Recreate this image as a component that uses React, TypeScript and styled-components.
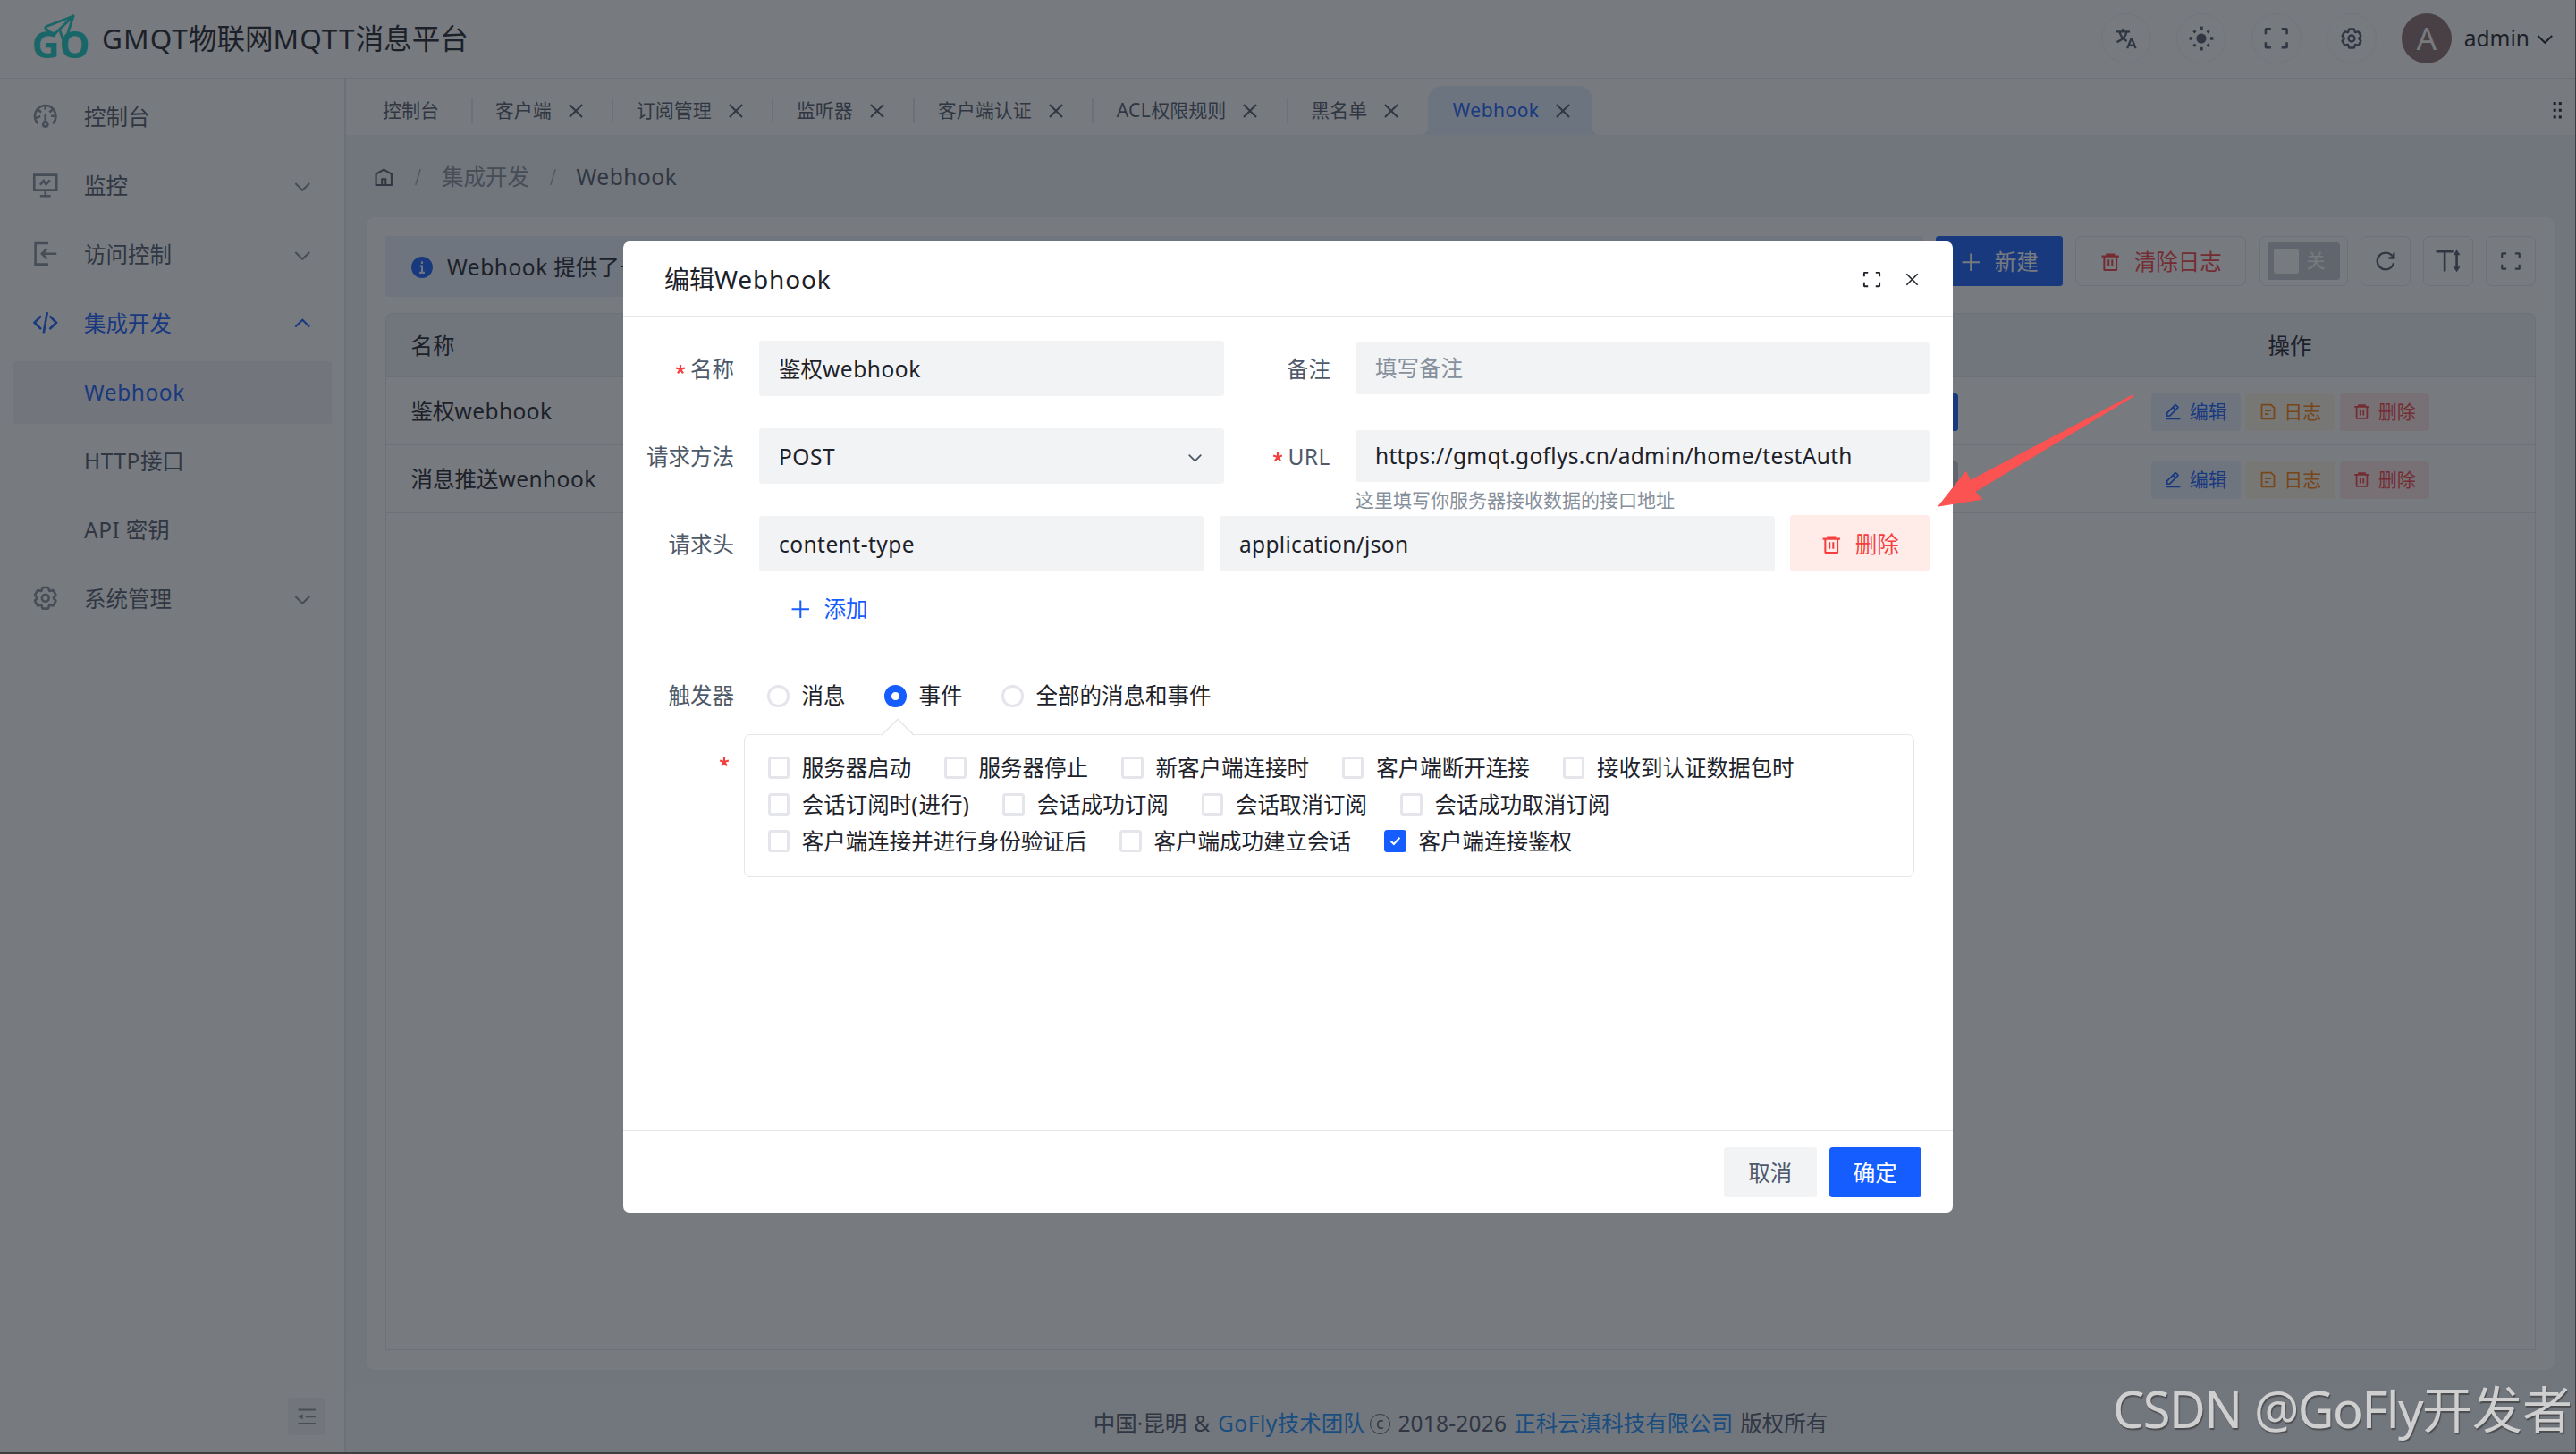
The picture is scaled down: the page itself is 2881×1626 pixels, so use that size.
import React from "react";
import styled, { createGlobalStyle, css } from "styled-components";

const GlobalStyle = createGlobalStyle`
  *, *::before, *::after { box-sizing: border-box; }
  html, body { margin: 0; padding: 0; }
  body {
    width: 2881px;
    height: 1626px;
    overflow: hidden;
    background: #3f3d3e;
    font-family: "Noto Sans", "Noto Sans CJK SC", sans-serif;
    font-size: 24.5px;
    line-height: 1.5;
    color: #1d2129;
  }
`;

/* ---------- text ---------- */

const Latin = styled.span<{ $track: number }>`
  letter-spacing: ${(p) => p.$track}em;
`;

function Label({ text, track = 0.022 }: { text: string; track?: number }) {
  return (
    <span>
      {text.split(/([\x21-\x7e]+)/).map((run, i) =>
        i % 2 ? (
          <Latin key={i} $track={track}>
            {run}
          </Latin>
        ) : (
          run
        )
      )}
    </span>
  );
}

/* ---------- icons ---------- */

const Svg = styled.svg<{ $size: number; $stroke?: number }>`
  display: block;
  flex: none;
  width: ${(p) => p.$size}px;
  height: ${(p) => p.$size}px;
  fill: none;
  stroke: currentColor;
  stroke-width: ${(p) => p.$stroke ?? 4};
`;

const paths: Record<string, string[]> = {
  dashboard: [
    "M41.8 24c.1 4.6-1.5 9.3-5.2 13m5.2-13h-8.3m8.3 0c-.1-4.4-1.8-8.7-4.6-12M24 6c5.5 0 10.1 2.4 13.2 6M24 6c-5.7 0-10.4 2.6-13.5 6.4M24 6v7.5M37.2 12 31 17.5m-20.5-5.1L17 17.5m-6.5-5.1C7 16.7 5.4 22.500 6.500 28m4.900 9c-2.600-2.600-4.200-5.700-4.900-9m0 0 9-3.500M28 38a4 4 0 1 1-8 0 4 4 0 0 1 8 0Zm-4-4V20",
  ],
  monitor: ["M5 7h38v26H5zM24 33v9M15 43h18", "m15 24 6-7 4 6 7-7"],
  access: ["M29 42H7V6h22", "M43 24H19m8-9-9 9 9 9"],
  code: ["M16.734 12.686 5.42 24l11.314 11.314m14.521-22.628L42.57 24 31.255 35.314M27.2 6.28l-6.251 35.453"],
  settings: [
    "M18.797 6.732A1 1 0 0 1 19.76 6h8.48a1 1 0 0 1 .964.732l1.285 4.628a1 1 0 0 0 1.213.7l4.651-1.2a1 1 0 0 1 1.116.468l4.24 7.344a1 1 0 0 1-.153 1.2L38.193 23.3a1 1 0 0 0 0 1.402l3.364 3.427a1 1 0 0 1 .153 1.2l-4.24 7.344a1 1 0 0 1-1.116.468l-4.65-1.2a1 1 0 0 0-1.214.7l-1.285 4.628a1 1 0 0 1-.964.732h-8.48a1 1 0 0 1-.963-.732L17.51 36.64a1 1 0 0 0-1.213-.7l-4.65 1.2a1 1 0 0 1-1.116-.468l-4.24-7.344a1 1 0 0 1 .153-1.2L9.809 24.7a1 1 0 0 0 0-1.402l-3.364-3.427a1 1 0 0 1-.153-1.2l4.24-7.344a1 1 0 0 1 1.116-.468l4.65 1.2a1 1 0 0 0 1.213-.7l1.286-4.628Z",
    "M30 24a6 6 0 1 1-12 0 6 6 0 0 1 12 0Z",
  ],
  down: ["M39.6 17.443 24.043 33 8.487 17.443"],
  up: ["M39.6 30.557 24.043 15 8.487 30.557"],
  close: ["M9.857 9.858 38.142 38.142M38.142 9.858 9.857 38.142"],
  home: ["M7 17 24 7l17 10v24H7V17Z", "M20 41V28h8v13"],
  plus: ["M5 24h38M24 5v38"],
  trash: ["M5 11h38M10.500 11v29a1 1 0 0 0 1 1h25a1 1 0 0 0 1-1V11M16 11V7h16v4M20 18v15M28 18v15"],
  edit: [
    "m30.48 19.038 5.733-5.734a1 1 0 0 0 0-1.414l-5.586-5.586a1 1 0 0 0-1.414 0l-5.734 5.734m7 7L15.763 33.754a1 1 0 0 1-.59.286l-6.048.708a1 1 0 0 1-1.113-1.069l.477-6.31a1 1 0 0 1 .29-.631l14.7-14.7m7 7-7-7M6 42h36",
  ],
  file: ["M16 21h16m-16 9h10m13 12H9a1 1 0 0 1-1-1V7a1 1 0 0 1 1-1h23l8 8v27a1 1 0 0 1-1 1Z"],
  fullscreen: ["M42 17V9a1 1 0 0 0-1-1h-8M6 17V9a1 1 0 0 1 1-1h8m27 23v8a1 1 0 0 1-1 1h-8M6 31v8a1 1 0 0 0 1 1h8"],
  refresh: ["M38.837 18C36.463 12.136 30.715 8 24 8 15.163 8 8 15.163 8 24s7.163 16 16 16c7.455 0 13.720-5.100 15.496-12M40 8v10H30"],
  language: [
    "m42 43-2.385-6M26 43l2.384-6m11.231 0-.795-2-4.180-10h-1.280l-4.181 10-.795 2m11.231 0h-11.230M17 5l1 5M5 11h26M11 11s1.889 7.826 6.611 12.174C22.333 27.522 25 29 25 29M25 11s-1.889 7.826-6.611 12.174C13.667 27.522 6 31 6 31",
  ],
};

function Icon({ name, size, stroke }: { name: string; size: number; stroke?: number }) {
  return (
    <Svg viewBox="0 0 48 48" $size={size} $stroke={stroke}>
      {paths[name].map((d) => (
        <path key={d} d={d} />
      ))}
    </Svg>
  );
}

function SunIcon() {
  return (
    <Svg viewBox="0 0 48 48" $size={28} $stroke={0}>
      <g fill="currentColor">
        <circle cx="24" cy="24" r="9.500" />
        {[0, 90, 180, 270].map((a) => (
          <rect key={a} x="21" y="1" width="6" height="6" transform={`rotate(${a} 24 24)`} />
        ))}
        {[45, 135, 225, 315].map((a) => (
          <rect key={a} x="21.500" y="3" width="5" height="5" transform={`rotate(${a} 24 24)`} />
        ))}
      </g>
    </Svg>
  );
}

function DotsIcon() {
  return (
    <Svg viewBox="0 0 48 48" $size={24.5} $stroke={0}>
      <g fill="currentColor">
        {[6, 21, 36].map((y) => (
          <React.Fragment key={y}>
            <rect x="15" y={y} width="6" height="6" />
            <rect x="27" y={y} width="6" height="6" />
          </React.Fragment>
        ))}
      </g>
    </Svg>
  );
}

function InfoIcon() {
  return (
    <Svg viewBox="0 0 48 48" $size={28}>
      <circle cx="24" cy="24" r="20.500" fill="#165dff" stroke="none" />
      <path d="M24 12.500v4.500M20 21.500h4v12M19 34h10" stroke="#e8f3ff" strokeWidth="3.600" />
    </Svg>
  );
}

function LineHeightIcon() {
  return (
    <Svg viewBox="0 0 48 48" $size={31.5}>
      <path d="M4 8h29M18.500 8v34" />
      <path d="M39 12v24" />
      <path d="M39 5l6 9H33zM39 43l6-9H33z" fill="currentColor" stroke="none" />
    </Svg>
  );
}

function FoldIcon() {
  return (
    <Svg viewBox="0 0 48 48" $size={24.5}>
      <path d="M43 9H5M43 24H21M43 39H5" />
      <path d="M15 30V18l-10 6z" fill="currentColor" stroke="none" />
    </Svg>
  );
}

const StarSvg = styled.svg`
  display: block;
  flex: none;
  width: 12px;
  height: 12px;
  stroke: #f53f3f;
  stroke-width: 2.2;
`;

function RequiredStar() {
  return (
    <StarSvg viewBox="0 0 12 12">
      <path d="M6 6V1M6 6l4.900-1.500M6 6l3 4.300M6 6l-3 4.300M6 6L1.100 4.500" />
    </StarSvg>
  );
}

const LogoSvg = styled.svg`
  display: block;
  width: 66px;
  height: 54px;
  overflow: visible;
`;

function Logo() {
  return (
    <LogoSvg viewBox="0 0 66 54">
      <g fill="none" stroke="#13cec2" strokeWidth="2.800" strokeLinejoin="round" strokeLinecap="round">
        <path d="M45 2 15 13.500c-1.500.8-1.500 2.200-.4 3L20 20.500" />
        <path d="M45 2 35 33 30.500 19.500" />
        <path d="M45 2 23 23" />
      </g>
      <text x="-1.500" y="49" fontSize="40.500" fontWeight="700" fill="#13cec2" textLength="65" lengthAdjust="spacingAndGlyphs">
        GO
      </text>
    </LogoSvg>
  );
}

/* ---------- page shell ---------- */

const Page = styled.div`
  position: relative;
  width: 2880px;
  height: 1624px;
  display: grid;
  grid-template-rows: 88px 1fr;
  background: #fff;
`;

const Header = styled.header`
  display: flex;
  align-items: center;
  justify-content: space-between;
  padding: 0 21.5px 1px 37px;
  border-bottom: 1.75px solid #e5e6eb;
`;

const Brand = styled.div`
  display: flex;
  align-items: center;
  gap: 11px;
  font-size: 31.5px;
  line-height: 44px;
`;

const HeaderTools = styled.div`
  display: flex;
  align-items: center;
  gap: 28px;
  color: #4e5969;
`;

const RoundButton = styled.div`
  display: flex;
  align-items: center;
  justify-content: center;
  width: 56px;
  height: 56px;
  border: 1.75px solid #f2f3f5;
  border-radius: 50%;
`;

const Avatar = styled.div`
  display: flex;
  align-items: center;
  justify-content: center;
  width: 56px;
  height: 56px;
  padding-top: 1px;
  border-radius: 50%;
  background: #8b6e6b;
  color: #fff;
  font-size: 35px;
`;

const UserMenu = styled.div`
  display: flex;
  align-items: center;
  gap: 5px;
  margin-left: -14px;
  padding-top: 1px;
  color: #1d2129;
`;

const Shell = styled.div`
  display: grid;
  grid-template-columns: 387px 1fr;
  min-height: 0;
`;

/* ---------- sidebar ---------- */

const Sidebar = styled.aside`
  display: flex;
  flex-direction: column;
  justify-content: space-between;
  padding: 7.5px 14px 19px;
  border-right: 2px solid #e5e6eb;
`;

const Menu = styled.nav`
  display: flex;
  flex-direction: column;
  gap: 7px;
`;

const MenuItem = styled.div<{ $active?: boolean; $selected?: boolean }>`
  display: grid;
  grid-template-columns: 59.5px 1fr 24px;
  align-items: center;
  height: 70px;
  padding: 2px 21px 0 20.5px;
  border-radius: 3.5px;
  color: ${(p) => (p.$active ? "#165dff" : "#4e5969")};
  background: ${(p) => (p.$selected ? "#f2f3f5" : "transparent")};
`;

const MenuIcon = styled.span<{ $active?: boolean }>`
  margin-top: -4px;
  color: ${(p) => (p.$active ? "#165dff" : "#86909c")};
`;

const MenuArrow = styled.span<{ $active?: boolean }>`
  color: ${(p) => (p.$active ? "#165dff" : "#86909c")};
`;

const FoldButton = styled.div`
  display: flex;
  align-items: center;
  justify-content: center;
  align-self: flex-end;
  width: 42px;
  height: 42px;
  margin-right: 7px;
  border-radius: 3.5px;
  background: #f2f3f5;
  color: #86909c;
`;

/* ---------- tabs ---------- */

const Main = styled.main`
  display: flex;
  flex-direction: column;
  min-width: 0;
  background: #f0f2f7;
`;

const TabBar = styled.div`
  display: flex;
  align-items: flex-start;
  height: 63px;
  padding: 8px 8px 0 0;
  background: #fff;
  font-size: 21px;
`;

const Tab = styled.div<{ $first?: boolean; $last?: boolean; $active?: boolean }>`
  position: relative;
  display: flex;
  align-items: center;
  height: 55px;
  gap: 15px;
  padding: 0 30.8px 0 25.2px;
  color: #4e5969;
  ${(p) => p.$first && css`padding: 1px 37.5px 0 41px;`}
  ${(p) => p.$last && css`padding-right: 28.5px;`}
  ${(p) =>
    !p.$last &&
    !p.$active &&
    css`
      &::after {
        content: "";
        position: absolute;
        right: 0;
        top: 14px;
        width: 2px;
        height: 28px;
        background: #e0e5f2;
      }
    `}
  ${(p) =>
    p.$active &&
    css`
      gap: 14px;
      padding: 0 21.5px 0 28px;
      border-radius: 16px 16px 0 0;
      background: #e1effe;
      color: #165dff;
      &::before,
      &::after {
        content: "";
        position: absolute;
        bottom: 0;
        width: 8px;
        height: 8px;
      }
      &::before {
        left: -8px;
        background: radial-gradient(circle at 0 0, transparent 7.5px, #e1effe 8px);
      }
      &::after {
        right: -8px;
        background: radial-gradient(circle at 100% 0, transparent 7.5px, #e1effe 8px);
      }
    `}
`;

const TabClose = styled.span`
  color: #4e5969;
`;

const TabMore = styled.div`
  display: flex;
  align-items: center;
  height: 55px;
  margin-left: auto;
  color: #1d2129;
`;

/* ---------- breadcrumb and card ---------- */

const Breadcrumb = styled.div`
  display: flex;
  align-items: center;
  height: 92px;
  padding: 2.5px 0 0 30px;
  color: #4e5969;
`;

const Slash = styled.svg`
  width: 7px;
  height: 18px;
  margin: 0 23px 0 22.5px;
  stroke: #a9aeb8;
  stroke-width: 1.6;
`;

const Muted = styled.span`
  color: #86909c;
`;

const Card = styled.section`
  display: flex;
  flex-direction: column;
  gap: 18px;
  height: 1289px;
  margin: 0 23.5px 0 23px;
  padding: 21px 20.5px 22px 21px;
  border-radius: 9px;
  background: #fff;
`;

const Toolbar = styled.div`
  display: flex;
  gap: 14px;
  height: 68px;
`;

const Notice = styled.div`
  display: flex;
  align-items: center;
  flex: 1;
  gap: 14.5px;
  height: 68px;
  padding: 2px 0 0 26.5px;
  border-radius: 3.5px;
  background: #e8f3ff;
`;

const ToolButton = styled.div<{ $kind: "primary" | "danger" | "box"; $width: number }>`
  display: flex;
  align-items: center;
  justify-content: center;
  gap: 14px;
  width: ${(p) => p.$width}px;
  height: 56px;
  padding-top: 2px;
  border: 1.75px solid #e5e6eb;
  border-radius: 7px;
  color: #4e5969;
  ${(p) =>
    p.$kind === "primary" &&
    css`
      border: none;
      border-radius: 3.5px;
      background: #165dff;
      color: #fff;
    `}
  ${(p) =>
    p.$kind === "danger" &&
    css`
      margin-right: 1px;
      color: #f53f3f;
    `}
  ${(p) =>
    p.$kind === "box" &&
    css`
      padding: 0 1px 0 0;
    `}
`;

const Switch = styled.div<{ $width: number; $on?: boolean }>`
  display: flex;
  align-items: center;
  gap: 9px;
  width: ${(p) => p.$width}px;
  height: 42px;
  padding: 0 7px;
  border-radius: 3.5px;
  flex-direction: ${(p) => (p.$on ? "row-reverse" : "row")};
  background: ${(p) => (p.$on ? "#165dff" : "#c9cdd4")};
  color: #fff;
  font-size: 21px;
`;

const Knob = styled.span`
  width: 28px;
  height: 28px;
  border-radius: 3.5px;
  background: #fff;
`;

const Table = styled.div`
  flex: 1;
  border: 1.75px solid #e5e6eb;
  border-radius: 7px 7px 0 0;
  overflow: hidden;
`;

const TableRow = styled.div<{ $head?: boolean }>`
  display: grid;
  grid-template-columns: 1fr 300px 549px;
  align-items: center;
  height: ${(p) => (p.$head ? 71 : 76)}px;
  border-bottom: 1.75px solid #e5e6eb;
  background: ${(p) => (p.$head ? "#f0f2f7" : "#fff")};
`;

const NameCell = styled.div`
  padding: 2.5px 0 0 27.5px;
`;

const CenterCell = styled.div`
  display: flex;
  justify-content: center;
  padding-top: 2px;
  padding-left: 1px;
  gap: 5.5px;
`;

const actionTone = {
  blue: { color: "#165dff", bg: "#e8f3ff" },
  orange: { color: "#ff7d00", bg: "#fff7e8" },
  red: { color: "#f53f3f", bg: "#ffe6e6" },
};

const ActionButton = styled.div<{ $tone: keyof typeof actionTone }>`
  display: flex;
  align-items: center;
  justify-content: center;
  gap: 7.5px;
  width: 100px;
  height: 42px;
  border-radius: 3.5px;
  font-size: 21px;
  color: ${(p) => actionTone[p.$tone].color};
  background: ${(p) => actionTone[p.$tone].bg};
`;

const Footer = styled.footer`
  display: flex;
  align-items: center;
  justify-content: center;
  height: 69px;
  margin-top: auto;
  padding-top: 6px;
  background: #f3f4f9;
  color: #4e5969;
  white-space: pre;
  word-spacing: 0.07em;
`;

const FooterLink = styled.span`
  color: #1890ff;
`;

const CopyMark = styled.span`
  display: inline-flex;
  align-items: center;
  justify-content: center;
  width: 23px;
  height: 23px;
  margin: 0 0.5px 0 5px;
  border: 1.2px solid currentColor;
  border-radius: 50%;
  font-size: 18px;
  line-height: 1;
  padding-bottom: 3px;
`;

/* ---------- dialog ---------- */

const Mask = styled.div`
  position: absolute;
  inset: 0;
  padding: 270px 0 0 697px;
  background: rgba(29, 33, 41, 0.6);
`;

const Dialog = styled.section`
  display: flex;
  flex-direction: column;
  width: 1487px;
  height: 1086px;
  border-radius: 7px;
  background: #fff;
`;

const DialogHeader = styled.div`
  display: flex;
  align-items: center;
  height: 84px;
  padding: 1px 35px 0 46px;
  border-bottom: 1.75px solid #e5e6eb;
  font-size: 28px;
`;

const DialogTools = styled.div`
  display: flex;
  align-items: center;
  gap: 23px;
  margin-left: auto;
`;

const DialogBody = styled.div`
  flex: 1;
  padding-top: 27px;
`;

const FormRow = styled.div<{ $height: number }>`
  display: flex;
  align-items: flex-start;
  height: ${(p) => p.$height}px;
`;

const FieldLabel = styled.div<{ $width: number }>`
  display: flex;
  align-items: center;
  justify-content: flex-end;
  gap: 5px;
  width: ${(p) => p.$width}px;
  height: 62px;
  margin-right: 28px;
  padding-top: 2px;
  color: #4e5969;
`;

const Field = styled.div<{ $width: number; $height?: number; $placeholder?: boolean }>`
  display: flex;
  align-items: center;
  justify-content: space-between;
  width: ${(p) => p.$width}px;
  height: ${(p) => p.$height ?? 62}px;
  padding: ${(p) => (p.$height ? 0 : 2)}px 22px 0;
  border-radius: 3.5px;
  background: #f2f3f5;
  color: ${(p) => (p.$placeholder ? "#86909c" : "#1d2129")};
`;

const FieldStack = styled.div`
  padding-top: 2px;
`;

const Hint = styled.div`
  height: 36px;
  margin-top: 2px;
  font-size: 21px;
  line-height: 36px;
  color: #86909c;
`;

const SelectArrow = styled.span`
  color: #4e5969;
`;

const RemoveButton = styled.div`
  display: flex;
  align-items: center;
  justify-content: center;
  gap: 14px;
  width: 156px;
  height: 63px;
  margin: -1px 0 0 17px;
  padding-top: 3px;
  border-radius: 3.5px;
  background: #ffece8;
  color: #f53f3f;
`;

const Spacer = styled.span`
  width: 18px;
`;

const AddButton = styled.div`
  display: flex;
  align-items: center;
  gap: 14px;
  height: 83px;
  padding: 1px 0 0 186px;
  color: #165dff;
`;

const TriggerRow = styled.div`
  display: flex;
  align-items: center;
  height: 99px;
  padding: 14px 0 0;
`;

const RadioItem = styled.div`
  display: flex;
  align-items: center;
  gap: 14px;
  margin-right: 43.5px;
`;

const RadioDot = styled.span<{ $checked?: boolean }>`
  width: 24.5px;
  height: 24.5px;
  border: ${(p) => (p.$checked ? "8.5px solid #165dff" : "3px solid #e5e6eb")};
  border-radius: 50%;
  background: #fff;
`;

const RadioLabel = styled.div`
  width: 124px;
  margin-right: 37px;
  text-align: right;
  color: #4e5969;
`;

const EventsRow = styled.div`
  display: flex;
  align-items: flex-start;
`;

const EventsStar = styled.div`
  width: 135px;
  padding: 25px 16px 0 0;
  display: flex;
  justify-content: flex-end;
`;

const EventsBox = styled.div`
  position: relative;
  display: flex;
  flex-wrap: wrap;
  align-content: flex-start;
  width: 1309px;
  height: 160px;
  padding: 16px 0 0 25.5px;
  border: 1.75px solid #e5e6eb;
  border-radius: 7px;
`;

const Pointer = styled.svg`
  position: absolute;
  left: 152px;
  top: -19px;
  width: 38px;
  height: 20px;
`;

const CheckItem = styled.div`
  display: flex;
  align-items: center;
  gap: 13.8px;
  height: 41px;
  margin-right: 37px;
`;

const CheckText = styled.span`
  padding-top: 2px;
`;

const CheckBox = styled.span<{ $checked?: boolean }>`
  display: flex;
  align-items: center;
  justify-content: center;
  width: 24.5px;
  height: 24.5px;
  border: ${(p) => (p.$checked ? "none" : "3px solid #e5e6eb")};
  border-radius: 3.5px;
  background: ${(p) => (p.$checked ? "#165dff" : "#fff")};
`;

const DialogFooter = styled.div`
  display: flex;
  justify-content: flex-end;
  gap: 14px;
  height: 92.5px;
  padding: 18.5px 35px 0 0;
  border-top: 1.75px solid #e5e6eb;
`;

const DialogButton = styled.div<{ $primary?: boolean }>`
  display: flex;
  align-items: center;
  justify-content: center;
  width: 103.5px;
  height: 56px;
  padding-top: 2px;
  border-radius: 3.5px;
  background: ${(p) => (p.$primary ? "#165dff" : "#f2f3f5")};
  color: ${(p) => (p.$primary ? "#fff" : "#4e5969")};
`;

/* ---------- annotations over the page ---------- */

const Annotation = styled.svg`
  position: absolute;
  left: 2160px;
  top: 436px;
  width: 232px;
  height: 136px;
`;

const Watermark = styled.div`
  position: absolute;
  right: 3px;
  bottom: 7.5px;
  font-size: 56px;
  line-height: 84px;
  white-space: nowrap;
  color: #cfcfd0;
  text-shadow: 1px 2px 1px rgba(60, 60, 60, 0.7);
`;

/* ---------- data ---------- */

const tabs = ["控制台", "客户端", "订阅管理", "监听器", "客户端认证", "ACL权限规则", "黑名单", "Webhook"];

const menu: { text: string; icon?: string; arrow?: "up" | "down"; active?: boolean; selected?: boolean }[] = [
  { text: "控制台", icon: "dashboard" },
  { text: "监控", icon: "monitor", arrow: "down" },
  { text: "访问控制", icon: "access", arrow: "down" },
  { text: "集成开发", icon: "code", arrow: "up", active: true },
  { text: "Webhook", active: true, selected: true },
  { text: "HTTP接口" },
  { text: "API 密钥" },
  { text: "系统管理", icon: "settings", arrow: "down" },
];

const events = [
  "服务器启动",
  "服务器停止",
  "新客户端连接时",
  "客户端断开连接",
  "接收到认证数据包时",
  "会话订阅时(进行)",
  "会话成功订阅",
  "会话取消订阅",
  "会话成功取消订阅",
  "客户端连接并进行身份验证后",
  "客户端成功建立会话",
  "客户端连接鉴权",
];

const hooks = [
  { name: "鉴权webhook", on: true },
  { name: "消息推送wenhook", on: false },
];

function SlashMark() {
  return (
    <Slash viewBox="0 0 7 18">
      <path d="M6.200 0 .8 18" />
    </Slash>
  );
}

function EditDialog() {
  return (
    <Dialog>
      <DialogHeader>
        <Label text="编辑Webhook" track={0.03} />
        <DialogTools>
          <Icon name="fullscreen" size={23} stroke={4} />
          <Icon name="close" size={21} stroke={3.6} />
        </DialogTools>
      </DialogHeader>
      <DialogBody>
        <FormRow $height={98}>
          <FieldLabel $width={124}>
            <RequiredStar />
            名称
          </FieldLabel>
          <Field $width={520}>
            <Label text="鉴权webhook" />
          </Field>
          <FieldLabel $width={119}>备注</FieldLabel>
          <FieldStack>
            <Field $width={642} $height={58} $placeholder>
              填写备注
            </Field>
          </FieldStack>
        </FormRow>
        <FormRow $height={98}>
          <FieldLabel $width={124}>请求方法</FieldLabel>
          <Field $width={520}>
            <Label text="POST" />
            <SelectArrow>
              <Icon name="down" size={21} />
            </SelectArrow>
          </Field>
          <FieldLabel $width={119}>
            <RequiredStar />
            <Label text="URL" />
          </FieldLabel>
          <FieldStack>
            <Field $width={642} $height={58}>
              <Label text="https://gmqt.goflys.cn/admin/home/testAuth" track={0.013} />
            </Field>
            <Hint>这里填写你服务器接收数据的接口地址</Hint>
          </FieldStack>
        </FormRow>
        <FormRow $height={62}>
          <FieldLabel $width={124}>请求头</FieldLabel>
          <Field $width={497}>
            <Label text="content-type" track={0.019} />
          </Field>
          <Spacer />
          <Field $width={621}>
            <Label text="application/json" track={0.013} />
          </Field>
          <RemoveButton>
            <Icon name="trash" size={24.5} />
            删除
          </RemoveButton>
        </FormRow>
        <AddButton>
          <Icon name="plus" size={24.5} />
          添加
        </AddButton>
        <TriggerRow>
          <RadioLabel>触发器</RadioLabel>
          <RadioItem>
            <RadioDot />
            消息
          </RadioItem>
          <RadioItem>
            <RadioDot $checked />
            事件
          </RadioItem>
          <RadioItem>
            <RadioDot />
            全部的消息和事件
          </RadioItem>
        </TriggerRow>
        <EventsRow>
          <EventsStar>
            <RequiredStar />
          </EventsStar>
          <EventsBox>
            <Pointer viewBox="0 0 38 20">
              <path d="M1 20 19 1.500 37 20z" fill="#fff" />
              <path d="M1 19 19 1.200 37 19" fill="none" stroke="#e5e6eb" strokeWidth="1.500" />
            </Pointer>
            {events.map((text, i) => (
              <CheckItem key={text}>
                <CheckBox $checked={i === events.length - 1}>
                  {i === events.length - 1 && (
                    <Svg viewBox="0 0 12 12" $size={13} $stroke={2}>
                      <path d="m1.500 6.200 3 3 6-6.700" stroke="#fff" />
                    </Svg>
                  )}
                </CheckBox>
                <CheckText>
                  <Label text={text} track={0.03} />
                </CheckText>
              </CheckItem>
            ))}
          </EventsBox>
        </EventsRow>
      </DialogBody>
      <DialogFooter>
        <DialogButton>取消</DialogButton>
        <DialogButton $primary>确定</DialogButton>
      </DialogFooter>
    </Dialog>
  );
}

export default function App() {
  return (
    <>
      <GlobalStyle />
      <Page>
        <Header>
          <Brand>
            <Logo />
            <Label text="GMQT物联网MQTT消息平台" track={0.034} />
          </Brand>
          <HeaderTools>
            <RoundButton>
              <Icon name="language" size={28} />
            </RoundButton>
            <RoundButton>
              <SunIcon />
            </RoundButton>
            <RoundButton>
              <Icon name="fullscreen" size={31.5} />
            </RoundButton>
            <RoundButton>
              <Icon name="settings" size={28} />
            </RoundButton>
            <Avatar>A</Avatar>
            <UserMenu>
              <Label text="admin" track={0} />
              <Icon name="down" size={24.5} />
            </UserMenu>
          </HeaderTools>
        </Header>
        <Shell>
          <Sidebar>
            <Menu>
              {menu.map((item) => (
                <MenuItem key={item.text} $active={item.active} $selected={item.selected}>
                  <MenuIcon $active={item.active}>{item.icon && <Icon name={item.icon} size={31.5} />}</MenuIcon>
                  <Label text={item.text} />
                  <MenuArrow $active={item.active}>{item.arrow && <Icon name={item.arrow} size={24.5} />}</MenuArrow>
                </MenuItem>
              ))}
            </Menu>
            <FoldButton>
              <FoldIcon />
            </FoldButton>
          </Sidebar>
          <Main>
            <TabBar>
              {tabs.map((text, i) => (
                <Tab key={text} $first={i === 0} $last={i === tabs.length - 2} $active={i === tabs.length - 1}>
                  <Label text={text} />
                  {i > 0 && (
                    <TabClose>
                      <Icon name="close" size={24} />
                    </TabClose>
                  )}
                </Tab>
              ))}
              <TabMore>
                <DotsIcon />
              </TabMore>
            </TabBar>
            <Breadcrumb>
              <Icon name="home" size={24.5} />
              <SlashMark />
              <Muted>集成开发</Muted>
              <SlashMark />
              <Label text="Webhook" />
            </Breadcrumb>
            <Card>
              <Toolbar>
                <Notice>
                  <InfoIcon />
                  <Label text="Webhook 提供了一" />
                </Notice>
                <ToolButton $kind="primary" $width={142}>
                  <Icon name="plus" size={24.5} />
                  新建
                </ToolButton>
                <ToolButton $kind="danger" $width={191}>
                  <Icon name="trash" size={24.5} />
                  清除日志
                </ToolButton>
                <ToolButton $kind="box" $width={99}>
                  <Switch $width={81}>
                    <Knob />关
                  </Switch>
                </ToolButton>
                <ToolButton $kind="box" $width={56}>
                  <Icon name="refresh" size={28} />
                </ToolButton>
                <ToolButton $kind="box" $width={56}>
                  <LineHeightIcon />
                </ToolButton>
                <ToolButton $kind="box" $width={56}>
                  <Icon name="fullscreen" size={26} />
                </ToolButton>
              </Toolbar>
              <Table>
                <TableRow $head>
                  <NameCell>名称</NameCell>
                  <CenterCell />
                  <CenterCell>操作</CenterCell>
                </TableRow>
                {hooks.map((hook) => (
                  <TableRow key={hook.name}>
                    <NameCell>
                      <Label text={hook.name} track={0.018} />
                    </NameCell>
                    <CenterCell>
                      <Switch $width={106} $on={hook.on} />
                    </CenterCell>
                    <CenterCell>
                      <ActionButton $tone="blue">
                        <Icon name="edit" size={21} />
                        编辑
                      </ActionButton>
                      <ActionButton $tone="orange">
                        <Icon name="file" size={21} />
                        日志
                      </ActionButton>
                      <ActionButton $tone="red">
                        <Icon name="trash" size={21} />
                        删除
                      </ActionButton>
                    </CenterCell>
                  </TableRow>
                ))}
              </Table>
            </Card>
            <Footer>
              <Label text="中国·昆明 & " />
              <FooterLink>
                <Label text="GoFly技术团队" track={0.022} />
              </FooterLink>
              <CopyMark>c</CopyMark>
              <Label text=" 2018-2026 " track={0.008} />
              <FooterLink>正科云滇科技有限公司</FooterLink>
              <Label text=" 版权所有" />
            </Footer>
          </Main>
        </Shell>
        <Mask>
          <EditDialog />
        </Mask>
        <Annotation viewBox="0 0 232 136">
          <path d="M8 130 38.600 91.300 43.700 101.300 224.600 6.200 226 7.200 49 113.700 56.600 122.300Z" fill="#fb5252" stroke="#fb5252" strokeLinejoin="round" />
        </Annotation>
        <Watermark>
          <Label text="CSDN @GoFly开发者" track={-0.027} />
        </Watermark>
      </Page>
    </>
  );
}
